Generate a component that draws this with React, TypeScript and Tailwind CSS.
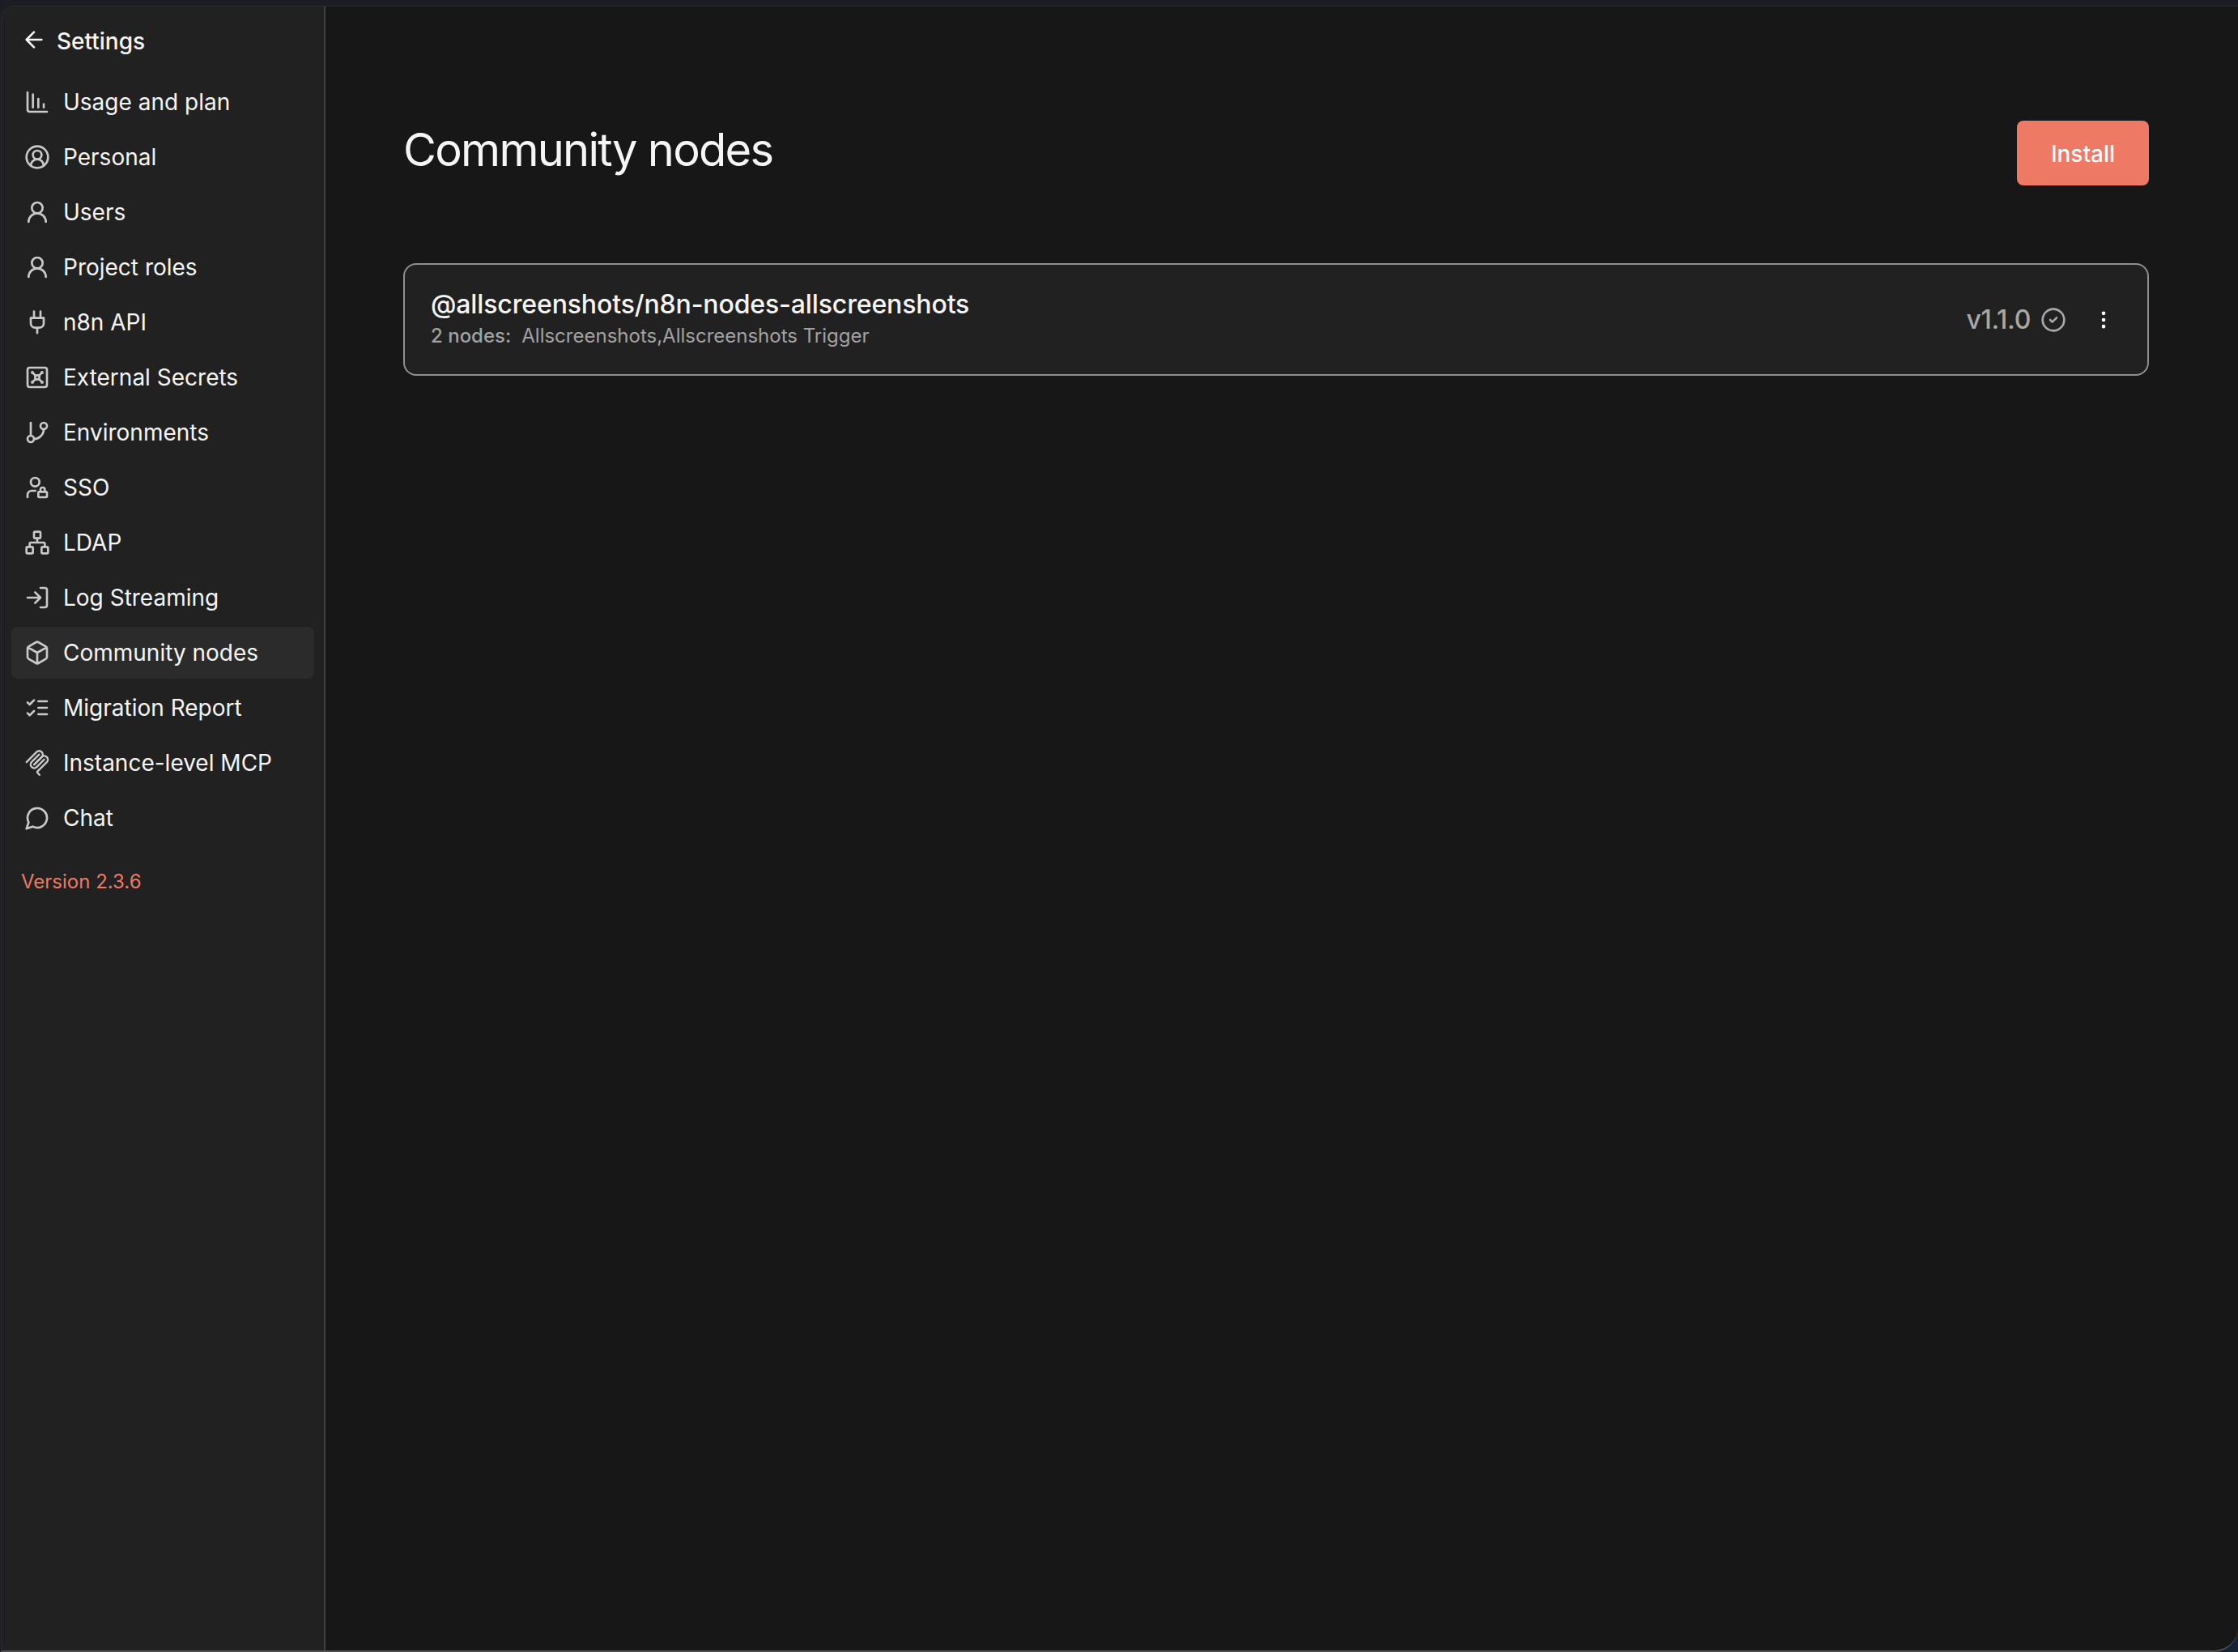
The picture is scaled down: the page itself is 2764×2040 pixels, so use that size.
import type { ReactNode } from "react";

type IconProps = { children: ReactNode; className?: string };

function Icon({ children, className = "size-8 shrink-0" }: IconProps) {
  return (
    <svg viewBox="0 0 24 24" fill="none" stroke="currentColor" strokeWidth={2} strokeLinecap="round" strokeLinejoin="round" className={className}>
      {children}
    </svg>
  );
}

const userRound = (<><circle cx="12" cy="8" r="5" /><path d="M20 21a8 8 0 0 0-16 0" /></>);

const items: { label: string; icon: ReactNode; active?: boolean }[] = [
  { label: "Usage and plan", icon: <Icon><path d="M13 17V9M18 17v-3M3 3v16a2 2 0 0 0 2 2h16M8 17V5" /></Icon> },
  { label: "Personal", icon: <Icon><path d="M18 20a6 6 0 0 0-12 0" /><circle cx="12" cy="10" r="4" /><circle cx="12" cy="12" r="10" /></Icon> },
  { label: "Users", icon: <Icon>{userRound}</Icon> },
  { label: "Project roles", icon: <Icon>{userRound}</Icon> },
  { label: "n8n API", icon: <Icon><path d="M12 22v-5M9 8V2M15 8V2M18 8v5a4 4 0 0 1-4 4h-4a4 4 0 0 1-4-4V8Z" /></Icon> },
  { label: "External Secrets", icon: <Icon><rect width="18" height="18" x="3" y="3" rx="2" /><circle cx="7.5" cy="7.5" r=".5" fill="currentColor" /><path d="m7.9 7.9 2.7 2.7" /><circle cx="16.5" cy="7.5" r=".5" fill="currentColor" /><path d="m13.4 10.6 2.7-2.7" /><circle cx="7.5" cy="16.5" r=".5" fill="currentColor" /><path d="m7.9 16.1 2.7-2.7" /><circle cx="16.5" cy="16.5" r=".5" fill="currentColor" /><path d="m13.4 13.4 2.7 2.7" /><circle cx="12" cy="12" r="2" /></Icon> },
  { label: "Environments", icon: <Icon><path d="M6 3v12" /><circle cx="18" cy="6" r="3" /><circle cx="6" cy="18" r="3" /><path d="M18 9a9 9 0 0 1-9 9" /></Icon> },
  { label: "SSO", icon: <Icon><circle cx="10" cy="7" r="4" /><path d="M10.3 15H7a4 4 0 0 0-4 4v2M15 15.5V14a2 2 0 0 1 4 0v1.5" /><rect width="8" height="5" x="13" y="16" rx=".899" /></Icon> },
  { label: "LDAP", icon: <Icon><rect x="16" y="16" width="6" height="6" rx="1" /><rect x="2" y="16" width="6" height="6" rx="1" /><rect x="9" y="2" width="6" height="6" rx="1" /><path d="M5 16v-3a1 1 0 0 1 1-1h12a1 1 0 0 1 1 1v3M12 12V8" /></Icon> },
  { label: "Log Streaming", icon: <Icon><path d="m10 17 5-5-5-5M15 12H3M15 3h4a2 2 0 0 1 2 2v14a2 2 0 0 1-2 2h-4" /></Icon> },
  { label: "Community nodes", active: true, icon: <Icon><path d="M21 8a2 2 0 0 0-1-1.73l-7-4a2 2 0 0 0-2 0l-7 4A2 2 0 0 0 3 8v8a2 2 0 0 0 1 1.73l7 4a2 2 0 0 0 2 0l7-4A2 2 0 0 0 21 16ZM3.3 7l8.7 5 8.7-5M12 22V12" /></Icon> },
  { label: "Migration Report", icon: <Icon><path d="m3 17 2 2 4-4M3 7l2 2 4-4M13 6h8M13 12h8M13 18h8" /></Icon> },
  {
    label: "Instance-level MCP",
    icon: (
      <svg viewBox="3 3 174 174" fill="none" stroke="currentColor" strokeWidth={13} strokeLinecap="round" className="size-8 shrink-0">
        <path d="M18 84.85 85.88 16.97c9.37-9.37 24.57-9.37 33.94 0s9.37 24.57 0 33.94L68.56 102.18" />
        <path d="m69.27 101.47 50.55-50.56c9.37-9.37 24.57-9.37 33.94 0l.36.36c9.37 9.37 9.37 24.57 0 33.94L92.72 146.6a8 8 0 0 0 0 11.31l12.61 12.61" />
        <path d="M102.85 33.94 52.65 84.15c-9.37 9.37-9.37 24.57 0 33.94s24.57 9.37 33.94 0l50.2-50.21" />
      </svg>
    ),
  },
  { label: "Chat", icon: <Icon><path d="M7.9 20A9 9 0 1 0 4 16.1L2 22Z" /></Icon> },
];

export default function App() {
  return (
    <div className="flex h-[2040px] w-[2764px] flex-col overflow-hidden bg-linear-to-r from-[#1c1c24] from-50% to-[#182338] to-50% font-['Inter',sans-serif] text-[#f5f5f5]">
      <div className="h-[7px] shrink-0 bg-[#1c1c24]" />
      <div className="ml-px flex min-h-0 flex-1 overflow-hidden rounded-tl-2xl rounded-br-[30px] border-t border-l border-b-2 border-t-[#2d2d31] border-b-[#505050] border-l-[#2d2d31] bg-[#171717]">
        <aside className="flex w-[400px] shrink-0 flex-col border-r-2 border-[#404040] bg-[#212121]">
          <div className="mt-[25px] ml-6 flex h-8 items-center gap-3">
            <Icon><path d="m12 19-7-7 7-7M19 12H5" /></Icon>
            <span className="mt-1 text-[28px] leading-8 font-medium">Settings</span>
          </div>
          <nav className="mt-[29px] ml-3 flex w-[374px] flex-col gap-1">
            {items.map((item) => (
              <a key={item.label} className={item.active ? "flex h-16 items-center gap-4 rounded-lg bg-[#2b2b2b] px-4" : "flex h-16 items-center gap-4 px-4"}>
                <span className="text-[#c9c9c9]">{item.icon}</span>
                <span className="text-[28px]">{item.label}</span>
              </a>
            ))}
          </nav>
          <span className="mt-[31px] ml-6 text-2xl text-[#ee7965]">Version 2.3.6</span>
        </aside>
        <main className="flex-1 pt-[141px] pr-[110px] pl-24">
          <div className="flex items-start justify-between">
            <h1 className="text-[56px] leading-[72px] tracking-[-1.72px]">Community nodes</h1>
            <button className="h-20 w-[163px] rounded-lg bg-[#ee7965] pt-0.5 text-[28px] font-medium text-white">Install</button>
          </div>
          <section className="mt-24 flex h-[139px] justify-between rounded-2xl border-2 border-[#8f8f8f] bg-[#212121] pr-10 pl-8">
            <div className="flex flex-col pt-7">
              <span className="text-[32px] leading-[42px] font-medium tracking-[-0.13px]">@allscreenshots/n8n-nodes-allscreenshots</span>
              <span className="flex gap-[13px] text-2xl leading-9 text-[#a3a3a3]">
                <span className="font-medium">2 nodes:</span>
                <span>Allscreenshots,Allscreenshots Trigger</span>
              </span>
            </div>
            <div className="flex items-center text-[#a8a8a8]">
              <span className="mr-3 text-[32px] font-medium tracking-[-0.3px]">v1.1.0</span>
              <Icon><circle cx="12" cy="12" r="10" /><path d="m9 12 2 2 4-4" /></Icon>
              <Icon className="ml-8 size-7 shrink-0 text-white"><circle cx="12" cy="12" r="1" /><circle cx="12" cy="5" r="1" /><circle cx="12" cy="19" r="1" /></Icon>
            </div>
          </section>
        </main>
      </div>
    </div>
  );
}
